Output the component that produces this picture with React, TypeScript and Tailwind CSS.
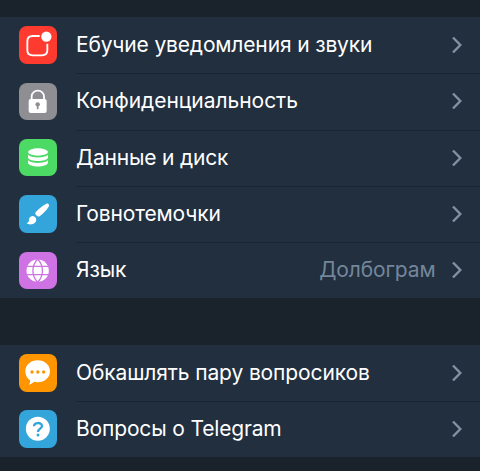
import type { ReactNode } from "react";

type Item = {
  title: string;
  titleClass: string;
  iconClass: string;
  icon: ReactNode;
  value?: string;
};

const NotificationsIcon = () => (
  <>
    <path
      d="M62 30H41Q25 30 25 46V73Q25 88 41 88H69Q85 88 85 73V53"
      fill="none"
      stroke="white"
      strokeWidth="5.5"
    />
    <circle cx="82" cy="32" r="15.5" fill="white" />
  </>
);

const LockIcon = () => (
  <>
    <path
      d="M38 50V40A18.5 17 0 0 1 75 40V50"
      fill="none"
      stroke="white"
      strokeWidth="5.5"
    />
    <rect x="29" y="48" width="54" height="42" rx="6" fill="white" />
    <circle cx="56" cy="64" r="6.5" fill="#8e8e93" />
    <path d="M53.5 65H58.5V79H53.5Z" fill="#8e8e93" />
  </>
);

const DataIcon = () => (
  <g fill="white">
    <ellipse cx="57" cy="39" rx="30" ry="11" />
    <path d="M27 47C38 58 76 58 87 47V56C82 69 32 69 27 56Z" />
    <path d="M27 64C38 75 76 75 87 64V72C82 86 32 86 27 72Z" />
  </g>
);

const BrushIcon = () => (
  <g fill="white">
    <path d="M81 27C86 23 93 28 89 35C82 46 73 55 63 63C60 66 56 65 52 61C48 57 48 54 51 50C60 41 70 33 81 27Z" />
    <path d="M34 66C40 60 49 64 51 70C54 80 47 86 39 88C33 89 26 88 23 84C29 83 30 80 30 75C30 71 31 68 34 66Z" />
  </g>
);

const GlobeIcon = () => (
  <>
    <circle cx="56" cy="56" r="33.5" fill="white" />
    <g fill="none" stroke="#cf72e4" strokeWidth="4">
      <path d="M22 43H90M22 68H90" />
      <path d="M56 21C37 41 37 71 56 91M56 21C75 41 75 71 56 91" />
    </g>
  </>
);

const ChatIcon = () => (
  <>
    <path
      d="M56 19C77 19 93 33 93 52S77 85 56 85C52 85 48 84.500 45 83.500C41 88 36 91 29 92C33 88 34 84 33 79C24 73 19 63 19 52C19 33 35 19 56 19Z"
      fill="white"
    />
    <g fill="#ff9500">
      <circle cx="39" cy="54" r="5" />
      <circle cx="56.500" cy="54" r="5" />
      <circle cx="74" cy="54" r="5" />
    </g>
  </>
);

const QuestionIcon = () => (
  <>
    <circle cx="56.500" cy="56" r="36" fill="white" />
    <path
      d="M45 49C45 36 69 36 69 48C69 56 57 56 57 66"
      fill="none"
      stroke="#34a5da"
      strokeWidth="7"
    />
    <circle cx="57" cy="75" r="4.5" fill="#34a5da" />
  </>
);

const mainItems: Item[] = [
  {
    title: "Ебучие уведомления и звуки",
    titleClass: "tracking-[-0.15px]",
    iconClass: "bg-[#ff3b30]",
    icon: <NotificationsIcon />,
  },
  {
    title: "Конфиденциальность",
    titleClass: "tracking-[-0.03px]",
    iconClass: "bg-[#8e8e93]",
    icon: <LockIcon />,
  },
  {
    title: "Данные и диск",
    titleClass: "tracking-[-0.2px]",
    iconClass: "bg-[#4cd964]",
    icon: <DataIcon />,
  },
  {
    title: "Говнотемочки",
    titleClass: "tracking-[-0.15px]",
    iconClass: "bg-[#34a5da]",
    icon: <BrushIcon />,
  },
  {
    title: "Язык",
    titleClass: "tracking-[-0.1px]",
    iconClass: "bg-[#cf72e4]",
    icon: <GlobeIcon />,
    value: "Долбограм",
  },
];

const helpItems: Item[] = [
  {
    title: "Обкашлять пару вопросиков",
    titleClass: "tracking-[-0.12px]",
    iconClass: "bg-[#ff9500]",
    icon: <ChatIcon />,
  },
  {
    title: "Вопросы о Telegram",
    titleClass: "tracking-[-0.16px]",
    iconClass: "bg-[#34a5da]",
    icon: <QuestionIcon />,
  },
];

const SettingsRow = ({ title, titleClass, iconClass, icon, value }: Item) => (
  <li className="group flex h-[56.3px] items-center pl-[19.3px]">
    <span
      className={`h-[37.5px] w-[37.5px] shrink-0 overflow-hidden rounded-[8px] ${iconClass}`}
    >
      <svg viewBox="0 0 112.5 112.5" className="h-full w-full">
        {icon}
      </svg>
    </span>
    <div className="ml-[19.2px] flex h-full flex-1 items-center border-t border-[#192533] pr-[18px] pb-[1.3px] group-first:border-transparent">
      <p className={`mr-auto whitespace-nowrap ${titleClass}`}>{title}</p>
      {value && (
        <p className="mr-[16.5px] tracking-[-0.12px] text-[#75869a]">{value}</p>
      )}
      <svg viewBox="0 0 10 18" className="h-[18px] w-[10px]">
        <path
          d="M1 1.500L8.300 9L1 16.500"
          fill="none"
          stroke="#7f91a3"
          strokeWidth="2.400"
        />
      </svg>
    </div>
  </li>
);

const SettingsGroup = ({ items }: { items: Item[] }) => (
  <ul className="bg-[#212f3f]">
    {items.map((item) => (
      <SettingsRow key={item.title} {...item} />
    ))}
  </ul>
);

const App = () => {
  return (
    <main className="flex h-[471px] w-[480px] flex-col gap-[46.3px] overflow-hidden bg-[#1a222c] pt-[17px] font-[Inter,sans-serif] text-[21px] leading-[28px] text-white">
      <SettingsGroup items={mainItems} />
      <SettingsGroup items={helpItems} />
    </main>
  );
};

export default App;
